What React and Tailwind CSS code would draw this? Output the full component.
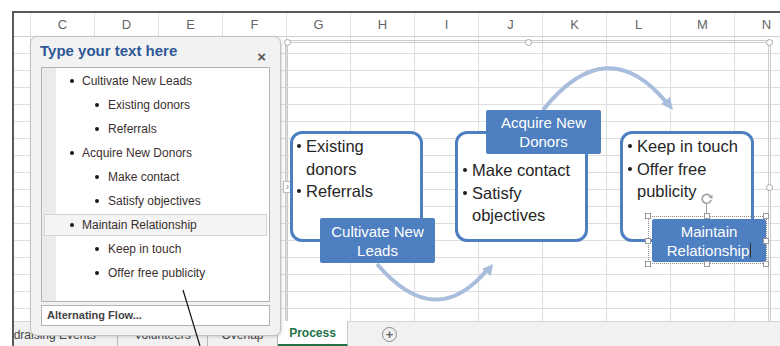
import React from "react";

const cols = ["C", "D", "E", "F", "G", "H", "I", "J", "K", "L", "M", "N"];
const rows = Array.from({ length: 17 }, (_, i) => i);

const paneItems = [
  { t: "Cultivate New Leads", l: 1 },
  { t: "Existing donors", l: 2 },
  { t: "Referrals", l: 2 },
  { t: "Acquire New Donors", l: 1 },
  { t: "Make contact", l: 2 },
  { t: "Satisfy objectives", l: 2 },
  { t: "Maintain Relationship", l: 1, sel: true },
  { t: "Keep in touch", l: 2 },
  { t: "Offer free publicity", l: 2 },
];

function Handle({ x, y }) {
  return (
    <div
      className="absolute w-[7px] h-[7px] rounded-full bg-white border border-[#a8a8a8]"
      style={{ left: x - 3.5, top: y - 3.5 }}
    />
  );
}

function SqHandle({ x, y }) {
  return (
    <div
      className="absolute w-[6px] h-[6px] bg-white border border-[#9a9a9a]"
      style={{ left: x - 3, top: y - 3 }}
    />
  );
}

function Bullet({ lines }) {
  return (
    <div className="flex items-start">
      <div className="w-[9px] shrink-0 flex justify-start pt-[9px]">
        <div className="w-[4px] h-[4px] rounded-full bg-[#1e1e1e]" />
      </div>
      <div className="whitespace-nowrap">
        {lines.map((l, i) => (
          <div key={i}>{l}</div>
        ))}
      </div>
    </div>
  );
}

export default function App() {
  return (
    <div className="relative w-[780px] h-[346px] overflow-hidden bg-white font-['Liberation_Sans',Arial,sans-serif]">
      <div className="h-[11px]" />
      <div className="ml-[12px] h-[335px] border-l-2 border-t-2 border-[#5a5a5a] flex flex-col overflow-hidden">
        {/* column header */}
        <div className="flex h-[24px] shrink-0 border-b border-[#cfcfcf]">
          <div className="w-[17px] shrink-0 border-r border-[#e2e2e2]" />
          {cols.map((c) => (
            <div
              key={c}
              className="w-[64px] shrink-0 border-r border-[#e2e2e2] flex items-center justify-center text-[13px] text-[#666]"
            >
              {c}
            </div>
          ))}
        </div>
        {/* grid */}
        <div className="flex-1 overflow-hidden">
          {rows.map((r) => (
            <div key={r} className="flex h-[17px] border-b border-[#dedede]">
              <div className="w-[17px] shrink-0 border-r border-[#dedede]" />
              {cols.map((c) => (
                <div key={c} className="w-[64px] shrink-0 border-r border-[#dedede]" />
              ))}
            </div>
          ))}
        </div>
        {/* sheet tabs */}
        <div className="relative z-10 h-[25px] shrink-0 bg-[#f1f1f1] border-t border-[#d6d6d6] flex text-[12px] text-[#444]">
          <div className="w-[104px] shrink-0 overflow-hidden flex items-center pt-[2px] border-r border-[#b8b8b8] whitespace-nowrap">
            <span className="ml-[-21px]">Fundraising Events</span>
          </div>
          <div className="w-[90px] shrink-0 flex items-center justify-center pt-[2px] border-r border-[#b8b8b8]">
            Volunteers
          </div>
          <div className="w-[70px] shrink-0 flex items-center justify-center pt-[2px] border-r border-[#b8b8b8]">
            Overlap
          </div>
          <div className="w-[70px] shrink-0 -mt-px bg-white border-b-2 border-[#217346] border-r border-r-[#c8c8c8] flex items-center justify-center font-bold text-[#217346]">
            Process
          </div>
          <div className="ml-[34px] flex items-center">
            <div className="w-[15px] h-[15px] rounded-full border border-[#8a8a8a] flex items-center justify-center text-[#666] text-[13px] leading-none font-bold">
              +
            </div>
          </div>
        </div>
      </div>

      {/* SmartArt frame */}
      <div className="absolute left-[285px] top-[40px] w-[486px] h-[300px] border-[3px] border-double border-[#cbcbcb]" />
      <Handle x={287} y={42} />
      <Handle x={528} y={42} />
      <Handle x={769} y={42} />
      <Handle x={769} y={187} />
      <div className="absolute left-[283px] top-[181px] w-[9px] h-[12px] bg-white border border-[#bdbdbd] flex items-center justify-center text-[10px] leading-none text-[#888]">
        ›
      </div>

      {/* arcs */}
      <svg className="absolute left-0 top-0" width="780" height="346">
        <path d="M543 110 Q 607 30 667 103" fill="none" stroke="#a9bedd" strokeWidth="4" />
        <polygon points="673,110 661,104 670,97" fill="#a9bedd" />
        <path d="M377 264 Q 435 332 487 270" fill="none" stroke="#a9bedd" strokeWidth="4" />
        <polygon points="493,264 491,276 482,269" fill="#a9bedd" />
      </svg>

      {/* box 1 */}
      <div className="absolute left-[290px] top-[131px] w-[133px] h-[111px] rounded-[12px] border-[3px] border-[#4d7fc2] bg-white pl-[4px] pt-[1px] text-[16.5px] leading-[22.5px] text-[#262626]">
        <Bullet lines={["Existing", "donors"]} />
        <Bullet lines={["Referrals"]} />
      </div>
      {/* box 2 */}
      <div className="absolute left-[455px] top-[131px] w-[133px] h-[111px] rounded-[12px] border-[3px] border-[#4d7fc2] bg-white pl-[5px] pt-[25px] text-[16.5px] leading-[22.5px] text-[#262626]">
        <Bullet lines={["Make contact"]} />
        <Bullet lines={["Satisfy", "objectives"]} />
      </div>
      {/* box 3 */}
      <div className="absolute left-[620px] top-[131px] w-[134px] h-[111px] rounded-[12px] border-[3px] border-[#4d7fc2] bg-white pl-[5px] pt-[1px] text-[16.5px] leading-[22.5px] text-[#262626]">
        <Bullet lines={["Keep in touch"]} />
        <Bullet lines={["Offer free", "publicity"]} />
      </div>

      {/* labels */}
      <div className="absolute left-[320px] top-[218px] w-[115px] h-[45px] rounded-[2px] bg-[#4e7fc1] flex flex-col items-center justify-center text-white text-[15px] leading-[19px]">
        <div>Cultivate New</div>
        <div>Leads</div>
      </div>
      <div className="absolute left-[486px] top-[110px] w-[115px] h-[44px] rounded-[2px] bg-[#4e7fc1] flex flex-col items-center justify-center text-white text-[15px] leading-[19px]">
        <div>Acquire New</div>
        <div>Donors</div>
      </div>
      <div className="absolute left-[652px] top-[219px] w-[114px] h-[43px] rounded-[2px] bg-[#4e7fc1] flex flex-col items-center justify-center text-white text-[15px] leading-[19px]">
        <div>Maintain</div>
        <div className="flex items-center">
          Relationship
          <span className="inline-block w-px h-[15px] bg-[#333] ml-[1px]" />
        </div>
      </div>
      {/* selection */}
      <div className="absolute left-[648px] top-[216px] w-[119px] h-[48px] border border-dotted border-[#8c8c8c]" />
      <div className="absolute left-[706px] top-[204px] w-px h-[12px] bg-[#a0a0a0]" />
      <svg className="absolute left-[700px] top-[192px]" width="14" height="14" viewBox="0 0 14 14">
        <path d="M10.5 4.5 A4.5 4.5 0 1 0 11 8" fill="none" stroke="#a6a6a6" strokeWidth="1.8" />
        <polygon points="12.5,2.5 12.5,7 8.5,5.5" fill="#a6a6a6" />
      </svg>
      <SqHandle x={648} y={216} />
      <SqHandle x={707} y={216} />
      <SqHandle x={766} y={216} />
      <SqHandle x={648} y={241} />
      <SqHandle x={766} y={241} />
      <SqHandle x={648} y={264} />
      <SqHandle x={707} y={264} />
      <SqHandle x={766} y={264} />

      {/* text pane */}
      <div className="absolute z-20 left-[30px] top-[36px] w-[251px] h-[300px] rounded-[7px] border border-[#c2c2c2] bg-[#f2f2f2] shadow-[1px_1px_3px_rgba(0,0,0,0.15)] flex flex-col px-[10px]">
        <div className="h-[30px] shrink-0 flex items-center justify-between">
          <span className="text-[15px] font-bold text-[#2e5897] -ml-[1px] -mt-[1px]">Type your text here</span>
          <span className="text-[15px] font-bold text-[#555] mr-[4px] mt-[8px] leading-none">×</span>
        </div>
        <div className="h-[235px] shrink-0 border border-[#b3b3b3] bg-[linear-gradient(to_right,#ebebeb_14px,#ffffff_14px)] pt-[1px] text-[12px] text-[#3a2f2f]">
          {paneItems.map((it, i) =>
            it.sel ? (
              <div
                key={i}
                className="mx-[2px] my-[1px] h-[22px] border border-[#d2d2d2] bg-[#f4f4f4] flex items-center pl-[25px] gap-[8px]"
              >
                <div className="w-[4px] h-[4px] rounded-full bg-[#1a1a1a]" />
                <span>{it.t}</span>
              </div>
            ) : (
              <div
                key={i}
                className={
                  "h-[24px] flex items-center " +
                  (it.l === 1 ? "pl-[28px] gap-[8px]" : "pl-[53px] gap-[9px]")
                }
              >
                <div className="w-[4px] h-[4px] rounded-full bg-[#1a1a1a]" />
                <span>{it.t}</span>
              </div>
            )
          )}
        </div>
        <div className="mt-[3px] h-[21px] shrink-0 border border-[#b3b3b3] bg-white flex items-center pl-[5px] text-[11px] font-bold text-[#444]">
          Alternating Flow...
        </div>
      </div>

      {/* leader line */}
      <svg className="absolute z-30 left-0 top-0 pointer-events-none" width="780" height="346">
        <line x1="183" y1="290" x2="200" y2="346" stroke="#111" strokeWidth="1.2" />
      </svg>
    </div>
  );
}
